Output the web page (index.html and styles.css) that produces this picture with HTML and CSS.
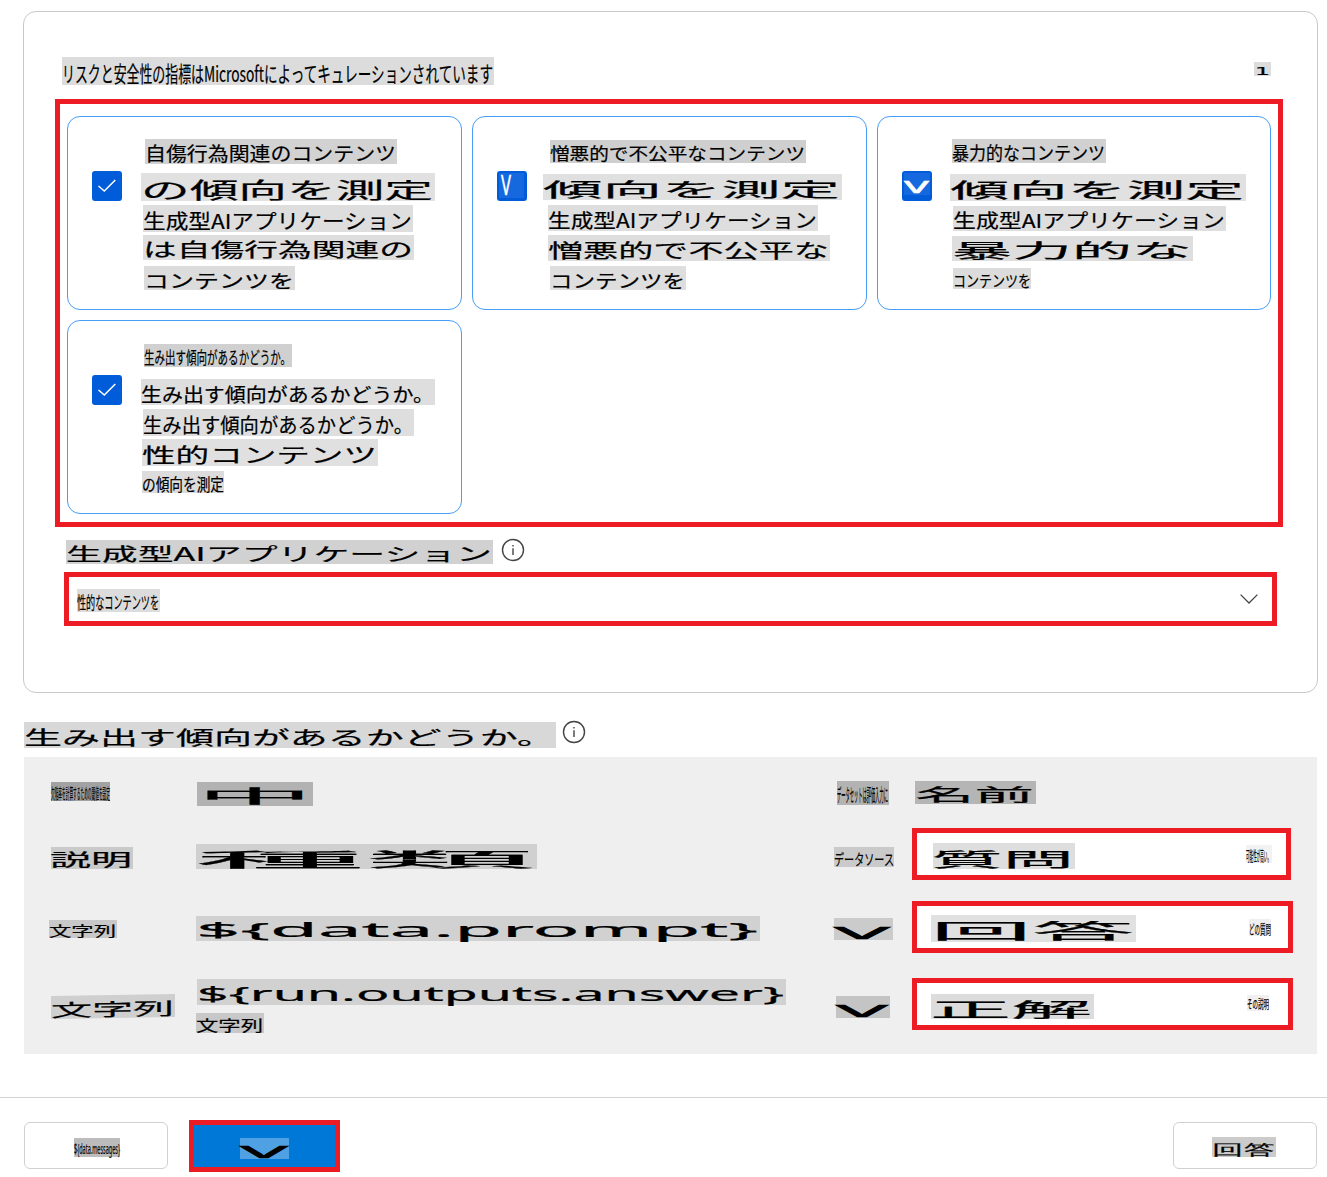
FILE: index.html
```html
<!DOCTYPE html>
<html lang="ja">
<head>
<meta charset="utf-8">
<title>評価の構成</title>
<link rel="stylesheet" href="styles.css">
</head>
<body>
<main class="page">
  <section class="panel">
    <header class="panel-head">
      <svg class="tag title"><text x="0" y="88%"><tspan textLength="142" lengthAdjust="spacingAndGlyphs">リスクと安全性の指標は</tspan><tspan textLength="60" lengthAdjust="spacingAndGlyphs">Microsoft</tspan><tspan textLength="229" lengthAdjust="spacingAndGlyphs">によってキュレーションされています</tspan></text></svg>
      <svg class="tag count"><text x="1" y="13" textLength="15" lengthAdjust="spacingAndGlyphs">1</text></svg>
    </header>
    <div class="metrics">
      <article class="card">
        <span class="check"><svg viewBox="0 0 30 30"><path d="M6.5 15 12.3 20 23.3 9"/></svg></span>
        <div class="lines">
          <svg class="tag a1"><text x="0" y="89%" textLength="251" lengthAdjust="spacingAndGlyphs">自傷行為関連のコンテンツ</text></svg>
          <svg class="tag a2"><text x="0" y="89%" textLength="292" lengthAdjust="spacingAndGlyphs">の傾向を測定</text></svg>
          <svg class="tag a3"><text x="0" y="89%" textLength="269" lengthAdjust="spacingAndGlyphs">生成型AIアプリケーション</text></svg>
          <svg class="tag a4"><text x="0" y="89%" textLength="270" lengthAdjust="spacingAndGlyphs">は自傷行為関連の</text></svg>
          <svg class="tag a5"><text x="0" y="92%" textLength="150" lengthAdjust="spacingAndGlyphs">コンテンツを</text></svg>
        </div>
      </article>
      <article class="card">
        <span class="check"><svg class="mark narrow latin"><text x="2" y="22" textLength="10" lengthAdjust="spacingAndGlyphs">V</text></svg></span>
        <div class="lines">
          <svg class="tag b1"><text x="0" y="89%" textLength="255" lengthAdjust="spacingAndGlyphs">憎悪的で不公平なコンテンツ</text></svg>
          <svg class="tag b2"><text x="0" y="89%" textLength="297" lengthAdjust="spacingAndGlyphs">傾向を測定</text></svg>
          <svg class="tag b3"><text x="0" y="89%" textLength="269" lengthAdjust="spacingAndGlyphs">生成型AIアプリケーション</text></svg>
          <svg class="tag b4"><text x="0" y="89%" textLength="281" lengthAdjust="spacingAndGlyphs">憎悪的で不公平な</text></svg>
          <svg class="tag b5"><text x="0" y="92%" textLength="135" lengthAdjust="spacingAndGlyphs">コンテンツを</text></svg>
        </div>
      </article>
      <article class="card">
        <span class="check"><svg class="mark wide latin"><text x="0" y="20" textLength="25" lengthAdjust="spacingAndGlyphs">V</text></svg></span>
        <div class="lines">
          <svg class="tag c1"><text x="0" y="89%" textLength="153" lengthAdjust="spacingAndGlyphs">暴力的なコンテンツ</text></svg>
          <svg class="tag c2"><text x="0" y="89%" textLength="294" lengthAdjust="spacingAndGlyphs">傾向を測定</text></svg>
          <svg class="tag c3"><text x="0" y="89%" textLength="272" lengthAdjust="spacingAndGlyphs">生成型AIアプリケーション</text></svg>
          <svg class="tag c4"><text x="0" y="89%" textLength="240" lengthAdjust="spacingAndGlyphs">暴力的な</text></svg>
          <svg class="tag c5"><text x="0" y="89%" textLength="78" lengthAdjust="spacingAndGlyphs">コンテンツを</text></svg>
        </div>
      </article>
      <article class="card">
        <span class="check"><svg viewBox="0 0 30 30"><path d="M6.5 15 12.3 20 23.3 9"/></svg></span>
        <div class="lines">
          <svg class="tag d1"><text x="0" y="89%" textLength="147" lengthAdjust="spacingAndGlyphs">生み出す傾向があるかどうか。</text></svg>
          <svg class="tag d2"><text x="0" y="89%" textLength="293" lengthAdjust="spacingAndGlyphs">生み出す傾向があるかどうか。</text></svg>
          <svg class="tag d3"><text x="0" y="89%" textLength="270" lengthAdjust="spacingAndGlyphs">生み出す傾向があるかどうか。</text></svg>
          <svg class="tag d4"><text x="0" y="89%" textLength="235" lengthAdjust="spacingAndGlyphs">性的コンテンツ</text></svg>
          <svg class="tag d5"><text x="0" y="89%" textLength="82" lengthAdjust="spacingAndGlyphs">の傾向を測定</text></svg>
        </div>
      </article>
    </div>
    <div class="field-label">
      <svg class="tag threshold"><text x="0" y="89%" textLength="426" lengthAdjust="spacingAndGlyphs">生成型AIアプリケーション</text></svg>
      <svg class="info" viewBox="0 0 24 24"><circle cx="12" cy="12" r="10.5"/><path d="M12 10.3V17M12 7v1.6"/></svg>
    </div>
    <div class="select">
      <svg class="tag choice"><text x="0" y="89%" textLength="82" lengthAdjust="spacingAndGlyphs">性的なコンテンツを</text></svg>
      <svg class="chevron" viewBox="0 0 18 10"><path d="M.6.6 9 9 17.4.6"/></svg>
    </div>
  </section>

  <div class="map-label">
    <svg class="tag map-title"><text x="0" y="89%" textLength="531" lengthAdjust="spacingAndGlyphs">生み出す傾向があるかどうか。</text></svg>
    <svg class="info" viewBox="0 0 24 24"><circle cx="12" cy="12" r="10.5"/><path d="M12 10.3V17M12 7v1.6"/></svg>
  </div>
  <section class="map">
    <div><svg class="tag h1"><text x="0" y="89%" textLength="59" lengthAdjust="spacingAndGlyphs">欠陥率を計算するための閾値を設定</text></svg></div>
    <div><svg class="tag h2"><text x="0" y="89%" textLength="116" lengthAdjust="spacingAndGlyphs">中</text></svg></div>
    <div><svg class="tag h3"><text x="0" y="89%" textLength="51" lengthAdjust="spacingAndGlyphs">データセットは評価入力に</text></svg></div>
    <div><svg class="tag h4"><text x="0" y="89%" textLength="119" lengthAdjust="spacingAndGlyphs">名前</text></svg></div>

    <div><svg class="tag r1a"><text x="-1" y="87%" textLength="82" lengthAdjust="spacingAndGlyphs">説明</text></svg></div>
    <div><svg class="tag r1b"><text x="-1" y="90%" textLength="340" lengthAdjust="spacingAndGlyphs">種類</text></svg></div>
    <div><svg class="tag r1c"><text x="0" y="89%" textLength="60" lengthAdjust="spacingAndGlyphs">データソース</text></svg></div>
    <div class="source s1">
      <svg class="tag v1"><text x="-2" y="91%" textLength="143" lengthAdjust="spacingAndGlyphs">質問</text></svg>
      <svg class="tag w1"><text x="0" y="89%" textLength="25" lengthAdjust="spacingAndGlyphs">可能性が高い。</text></svg>
    </div>

    <div><svg class="tag r2a"><text x="0" y="87%" textLength="67" lengthAdjust="spacingAndGlyphs">文字列</text></svg></div>
    <div><svg class="tag r2b latin"><text x="0" y="83%" textLength="562" lengthAdjust="spacingAndGlyphs">${data.prompt}</text></svg></div>
    <div><svg class="tag r2c latin"><text x="0" y="94%" textLength="56" lengthAdjust="spacingAndGlyphs">V</text></svg></div>
    <div class="source s2">
      <svg class="tag v2"><text x="-1" y="90%" textLength="204" lengthAdjust="spacingAndGlyphs">回答</text></svg>
      <svg class="tag w2"><text x="0" y="89%" textLength="22" lengthAdjust="spacingAndGlyphs">どの質問</text></svg>
    </div>

    <div><svg class="tag r3a"><text x="0" y="91%" textLength="123" lengthAdjust="spacingAndGlyphs">文字列</text></svg></div>
    <div>
      <svg class="tag r3b latin"><text x="0" y="83%" textLength="587" lengthAdjust="spacingAndGlyphs">${run.outputs.answer}</text></svg>
      <svg class="tag r3d"><text x="0" y="88%" textLength="67" lengthAdjust="spacingAndGlyphs">文字列</text></svg>
    </div>
    <div><svg class="tag r3c latin"><text x="0" y="94%" textLength="52" lengthAdjust="spacingAndGlyphs">V</text></svg></div>
    <div class="source s3">
      <svg class="tag v3"><text x="-1" y="90%" textLength="162" lengthAdjust="spacingAndGlyphs">正解</text></svg>
      <svg class="tag w3"><text x="0" y="89%" textLength="22" lengthAdjust="spacingAndGlyphs">その説明</text></svg>
    </div>
  </section>
</main>
<footer class="actions">
  <button class="btn"><svg class="tag back latin"><text x="0" y="82%" textLength="46" lengthAdjust="spacingAndGlyphs">${data.messages}</text></svg></button>
  <button class="btn primary"><svg class="tag next latin"><text x="0" y="93%" textLength="48" lengthAdjust="spacingAndGlyphs">V</text></svg></button>
  <button class="btn cancel"><svg class="tag stop"><text x="0" y="90%" textLength="63" lengthAdjust="spacingAndGlyphs">回答</text></svg></button>
</footer>
</body>
</html>
```
FILE: styles.css
```css
* { box-sizing: border-box; }

body {
  margin: 0;
  background: #fff;
  color: #000;
  font-family: "Noto Sans CJK JP", "Noto Sans", sans-serif;
}

.page { padding: 11px 9px 0 23px; }

/* Text chips: the text is fitted to the chip's width */
.tag {
  display: block;
  flex: none;
  width: var(--w);
  height: var(--h);
  margin: var(--m, 0);
  background: var(--bg, #dedede);
  overflow: visible;
}
.tag text {
  font-size: calc(var(--h) * 0.765);
  fill: #000;
  stroke: #000;
  stroke-width: 0.2px;
}
.latin text { font-family: "Noto Sans", sans-serif; }

.panel {
  height: 682px;
  border: 1px solid #c8c8c8;
  border-radius: 13px;
  padding: 45px 34px 0 31px;
}
.panel-head {
  display: flex;
  justify-content: space-between;
  height: 42px;
  padding: 0 12px 0 7px;
}
.title { --w: 432px; --h: 28px; --bg: #dcdcdc; }
.count { --w: 17px; --h: 14px; --m: 5px 0 0; --bg: #dcdcdc; }
.count text { font-family: "DejaVu Sans", sans-serif; font-size: 11px; }

.metrics {
  display: grid;
  grid-template-columns: 395px 395px 394px;
  grid-auto-rows: 194px;
  gap: 10px;
  width: 1228px;
  height: 428px;
  padding: 12px 7px 0;
  border: 5px solid #ed1c24;
}
.card {
  display: flex;
  gap: 19px;
  border: 1px solid #479ef5;
  border-radius: 13px;
  padding: 22px 0 0 24px;
}
.check {
  flex: none;
  width: 30px;
  height: 30px;
  margin-top: 32px;
  padding: 2px;
  background: #015cda;
  border-radius: 3px;
}
.check > svg { display: block; }
.check > svg[viewBox] { width: 30px; height: 30px; margin: -2px; }
.check path { fill: none; stroke: #fff; stroke-width: 1.5; }
.mark { width: 25px; height: 25px; background: #1668df; overflow: visible; }
.mark text { fill: #fff; font-size: 27px; stroke: #fff; stroke-width: 0.4px; }
.wide { height: 22px; width: 26px; }
.wide text { font-size: 17px; font-weight: 500; }

.a1 { --w: 252px; --h: 25px; --m: 0 0 0 4px; --bg: #d2d2d2; }
.a2 { --w: 294px; --h: 28px; --m: 9px 0 0; --bg: #e1e1e1; }
.a3 { --w: 270px; --h: 27px; --m: 4px 0 0 2px; }
.a4 { --w: 271px; --h: 25px; --m: 3px 0 0 2px; }
.a5 { --w: 151px; --h: 24px; --m: 6px 0 0 3px; --bg: #dcdcdc; }

.b1 { --w: 256px; --h: 23px; --m: 1px 0 0 4px; --bg: #cfcfcf; }
.b2 { --w: 299px; --h: 26px; --m: 11px 0 0 -3px; --bg: #e0e0e0; }
.b3 { --w: 270px; --h: 26px; --m: 5px 0 0 2px; }
.b4 { --w: 282px; --h: 26px; --m: 4px 0 0 2px; }
.b5 { --w: 136px; --h: 24px; --m: 5px 0 0 4px; }

.c1 { --w: 154px; --h: 24px; --m: 0 0 0 1px; --bg: #d1d1d1; }
.c2 { --w: 296px; --h: 27px; --m: 11px 0 0 -1px; --bg: #e1e1e1; }
.c3 { --w: 273px; --h: 25px; --m: 5px 0 0 2px; }
.c4 { --w: 241px; --h: 25px; --m: 5px 0 0 1px; }
.c5 { --w: 78px; --h: 21px; --m: 7px 0 0 2px; --bg: #dcdcdc; }

.d1 { --w: 148px; --h: 23px; --m: 1px 0 0 3px; --bg: #d0d0d0; }
.d2 { --w: 294px; --h: 26px; --m: 12px 0 0; }
.d3 { --w: 271px; --h: 27px; --m: 4px 0 0 2px; }
.d4 { --w: 236px; --h: 27px; --m: 3px 0 0 1px; --bg: #e0e0e0; }
.d5 { --w: 82px; --h: 22px; --m: 5px 0 0 1px; --bg: #dcdcdc; }

.field-label, .map-label { display: flex; }
.field-label { padding: 13px 0 0 11px; height: 45px; }
.threshold { --w: 427px; --h: 24px; --bg: #d1d1d1; }
.info {
  width: 24px;
  height: 24px;
  margin: -2px 0 0 8px;
  fill: none;
  stroke: #444;
  stroke-width: 1.4;
}

.select {
  display: flex;
  justify-content: space-between;
  width: 1213px;
  height: 54px;
  margin-left: 9px;
  padding: 12px 14px 0 8px;
  border: 5px solid #ed1c24;
}
.choice { --w: 83px; --h: 23px; --bg: #dcdcdc; }
.chevron {
  width: 18px;
  height: 10px;
  margin-top: 5px;
  fill: none;
  stroke: #444;
  stroke-width: 1.3;
}

.map-label { height: 64px; padding: 29px 0 0 1px; }
.map-label .info { margin: -2px 0 0 6px; }
.map-title { --w: 532px; --h: 26px; --bg: #d8d8d8; }

.map {
  display: grid;
  grid-template-columns: 172px 638px 78px 1fr;
  grid-template-rows: 65px 66px 77px 89px;
  width: 1293px;
  margin-left: 1px;
  background: #efefef;
}
.h1 { --w: 59px; --h: 19px; --m: 25px 0 0 27px; --bg: #a2a2a2; }
.h2 { --w: 116px; --h: 24px; --m: 25px 0 0 1px; --bg: #b2b2b2; }
.h3 { --w: 52px; --h: 24px; --m: 24px 0 0 3px; --bg: #b3b3b3; }
.h4 { --w: 121px; --h: 23px; --m: 24px 0 0 3px; --bg: #b5b5b5; }

.r1a { --w: 82px; --h: 22px; --m: 25px 0 0 27px; --bg: #cacaca; }
.r1b { --w: 341px; --h: 25px; --m: 22px 0 0; --bg: #d0d0d0; }
.r1c { --w: 60px; --h: 20px; --m: 25px 0 0; --bg: #cacaca; }

.r2a { --w: 68px; --h: 18px; --m: 32px 0 0 25px; --bg: #c8c8c8; }
.r2b { --w: 564px; --h: 25px; --m: 28px 0 0; --bg: #d1d1d1; }
.r2c { --w: 59px; --h: 22px; --m: 30px 0 0; --bg: #cbcbcb; }

.r3a { --w: 124px; --h: 23px; --m: 30px 0 0 27px; --bg: #cfcfcf; transform: skewY(-1deg); }
.r3b { --w: 589px; --h: 26px; --m: 14px 0 0 1px; --bg: #d1d1d1; }
.r3d { --w: 68px; --h: 20px; --m: 8px 0 0; --bg: #c8c8c8; }
.r3c { --w: 54px; --h: 22px; --m: 31px 0 0 2px; --bg: #c4c4c4; }
.r2c text, .r3c text, .next text { stroke-width: 0.5px; }

.source {
  display: flex;
  justify-content: space-between;
  width: 381px;
  height: 52px;
  background: #fff;
  border: 5px solid #ed1c24;
}
.s1 { width: 379px; margin-top: 6px; padding: 10px 14px 0 16px; }
.s2 { margin-top: 13px; padding: 9px 17px 0 14px; }
.s3 { margin-top: 13px; padding: 11px 19px 0 14px; }
.v1 { --w: 142px; --h: 26px; }
.v2 { --w: 205px; --h: 27px; --bg: #e1e1e1; }
.v3 { --w: 163px; --h: 25px; --bg: #dcdcdc; }
.w1 { --w: 26px; --h: 18px; --m: 2px 0 0; --bg: #f2f2f2; }
.w2 { --w: 22px; --h: 17px; --m: 4px 0 0; --bg: #efefef; }
.w3 { --w: 22px; --h: 16px; --m: 1px 0 0; --bg: #f0f0f0; }

.actions {
  display: flex;
  align-items: flex-start;
  height: 80px;
  margin-top: 43px;
  padding: 22px 10px 0 24px;
  border-top: 1px solid #d4d4d4;
}
.btn {
  display: flex;
  align-items: flex-start;
  justify-content: center;
  width: 144px;
  height: 47px;
  margin-top: 2px;
  padding: 15px 0 0 2px;
  background: #fff;
  border: 1px solid #d0d0d0;
  border-radius: 6px;
}
.primary {
  width: 151px;
  height: 52px;
  margin: 0 0 0 21px;
  padding: 13px 1px 0 0;
  background: #0078d7;
  border: 5px solid #ed1c24;
  border-radius: 0;
}
.cancel { margin-left: auto; padding: 14px 0 0; }
.back { --w: 46px; --h: 19px; --bg: #bcbcbc; }
.next { --w: 49px; --h: 21px; --bg: #4fa1e3; }
.stop { --w: 64px; --h: 20px; --m: 0 3px 0 0; --bg: #cbcbcb; }
```
